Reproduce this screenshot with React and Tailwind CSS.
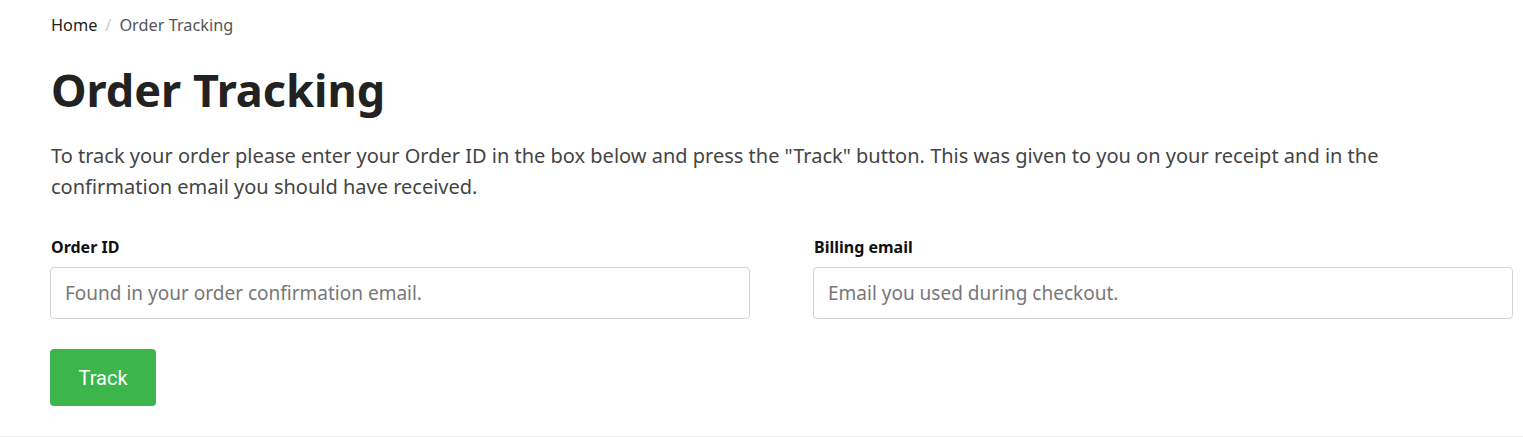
export default function App() {
  return (
    <div className="w-[1523px] h-[437px] bg-white border-b border-[#ececec] overflow-hidden" style={{ fontFamily: '"Noto Sans", "Open Sans", sans-serif' }}>
      <div className="pl-[51px] pr-[10px]">
        <nav className="pt-[13px] flex items-center text-[16.3px] leading-[24px]">
          <span className="text-[#222]">Home</span>
          <span className="text-[#ccc] mx-[8px]">/</span>
          <span className="text-[#555]">Order Tracking</span>
        </nav>
        <h1 className="mt-[25px] text-[45px] leading-[56px] font-bold text-[#222]">Order Tracking</h1>
        <p className="mt-[22px] text-[20px] leading-[31px] text-[#444] max-w-[1400px]">
          To track your order please enter your Order ID in the box below and press the "Track" button. This was given to you on your receipt and in the confirmation email you should have received.
        </p>
        <div className="mt-[33px] grid grid-cols-2 gap-[63px] w-[1463px] -ml-[1px]">
          <div>
            <label className="block text-[16px] leading-[24px] font-bold text-[#111] pl-[1px]">Order ID</label>
            <input className="mt-[8px] w-full h-[52px] border border-[#d4d4d4] rounded-[4px] px-[14px] text-[19px] placeholder:text-[#777] outline-none" placeholder="Found in your order confirmation email." />
          </div>
          <div>
            <label className="block text-[16px] leading-[24px] font-bold text-[#111] pl-[1px]">Billing email</label>
            <input className="mt-[8px] w-full h-[52px] border border-[#d4d4d4] rounded-[4px] px-[14px] text-[19px] placeholder:text-[#777] outline-none" placeholder="Email you used during checkout." />
          </div>
        </div>
        <button className="mt-[30px] -ml-[1px] w-[106px] h-[57px] bg-[#3cb54a] rounded-[4px] text-white text-[20px]" style={{ fontFamily: 'Roboto, "Liberation Sans", sans-serif' }}>Track</button>
      </div>
    </div>
  );
}
